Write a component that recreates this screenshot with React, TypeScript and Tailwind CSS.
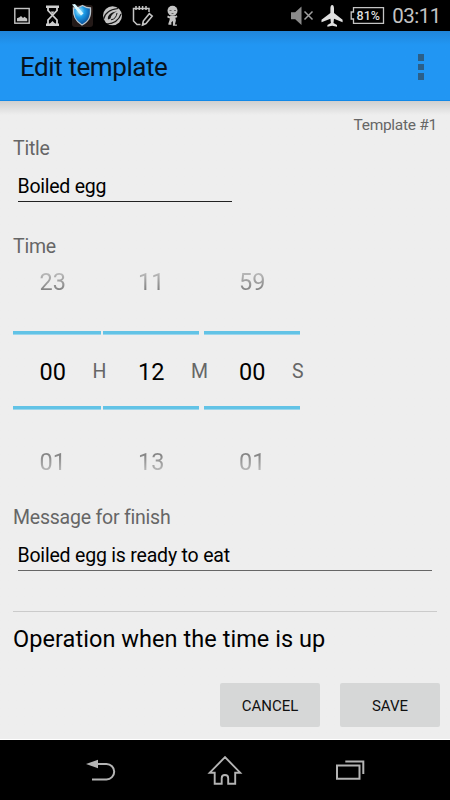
import type { ReactNode } from "react";

const columns = [
  { prev: "23", value: "00", next: "01", unit: "H", box: "w-[87.5px]", num: "pl-[26.5px]", unitBox: "left-[79.5px]" },
  { prev: "11", value: "12", next: "13", unit: "M", box: "w-[96px] ml-[2.5px]", num: "pl-[35px]", unitBox: "left-[88px]" },
  { prev: "59", value: "00", next: "01", unit: "S", box: "w-[96px] ml-[5px]", num: "pl-[35px]", unitBox: "left-[88px]" },
];

function StatusBar() {
  return (
    <div className="h-[31px] shrink-0 bg-black">
      <svg width="450" height="31" viewBox="0 0 450 31" fill="none">
        <defs>
          <radialGradient id="shield" cx="0.35" cy="0.3" r="0.75">
            <stop offset="0" stopColor="#b5f2ff" />
            <stop offset="0.4" stopColor="#1d9be6" />
            <stop offset="1" stopColor="#07448f" />
          </radialGradient>
        </defs>
        {/* gallery */}
        <rect x="14.800" y="8.500" width="14.400" height="14.700" stroke="#c4c4c4" strokeWidth="1.400" />
        <path d="M17 21.200v-3l2.500-1 1.500-1.200 2 2 1.500-1.200 2.700 2v2.400z" fill="#c4c4c4" />
        {/* hourglass */}
        <path d="M46 6.700h13M46 24.800h13" stroke="#cfcfcf" strokeWidth="2.600" />
        <path d="M48 7v3.500l9 9.500v4M57 7v3.500l-9 9.500v4" stroke="#cfcfcf" strokeWidth="1.800" />
        <path d="M50.500 11.500h4l-2 2.500zM49.500 24l3-3 3 3z" fill="#cfcfcf" />
        {/* antivirus shield */}
        <rect x="72" y="5" width="21" height="22" rx="3" fill="#241a18" />
        <path d="M73.500 8c4 .5 6-.5 9-2.500 3 2 5.500 2.500 8 2.500.5 8-1 13-8.500 17-7-4-9-9-8.500-17z" fill="url(#shield)" stroke="#b9c6cf" strokeWidth="1.300" />
        <path d="M72 4.500l3-.5 8.500 9.500-2.500 2z" fill="#d9f8ff" />
        {/* globe swirl */}
        <circle cx="112.500" cy="15.800" r="9.500" fill="#c4c4c4" />
        <path d="M103.500 19.500c1-6 6-10 14.500-11M107 24c6.500-.5 12-4 14-10" stroke="#161616" strokeWidth="1.200" />
        <path d="M108 19.500c-1-4 3.500-8 9-8-3.500 1.200-6 3.500-6.500 7z" fill="#161616" />
        <path d="M111 19.800c3.500-.3 5.500-3 6-6.800" stroke="#161616" strokeWidth="1" />
        {/* notepad */}
        <path d="M140.500 24.500h-3.500l-3.500-3.500V8.500h15.500v3.500" stroke="#c4c4c4" strokeWidth="1.500" />
        <path d="M136 6v4M139.300 6v4M142.600 6v4M146 6v4" stroke="#c4c4c4" strokeWidth="1.500" />
        <path d="M142.500 25l.8-4 6-7.300 2.900 2.500-6.200 7.400z" stroke="#c4c4c4" strokeWidth="1.600" />
        <path d="M142 25.800l.8-3.500 2.700 2.500z" fill="#c4c4c4" />
        {/* little figure */}
        <circle cx="172.500" cy="10.800" r="5" fill="#c4c4c4" />
        <path d="M169.500 10.500h2M174 10.500h2M171.500 13.500h2" stroke="#666" strokeWidth="1" />
        <path d="M170 17.600l-2.500-1.200M175 17.200l2-1" stroke="#c4c4c4" strokeWidth="1.900" />
        <path d="M170.200 15.500h4.700l1 5-1 4h2v1.200h-4v-4.600l-1.500 1.200v2.400h-3v-1.200l1.200-3.500z" fill="#c4c4c4" />
        {/* muted speaker */}
        <path d="M291 12.300h4.200l6.300-5.800v18.500l-6.300-5.800H291z" fill="#8b8b8b" />
        <path d="M304.500 11.500l8 8M312.500 11.500l-8 8" stroke="#a0a0a0" strokeWidth="1.500" />
        {/* airplane */}
        <path d="M332.200 5c1.200 0 1.800 1.600 1.800 3.500v4.600l8.600 6.700v2.500l-8.600-3.600-.5 4.300 3.500 2v1.700l-4.800-1-4.800 1v-1.700l3.500-2-.5-4.300-8.900 3.600v-2.500l8.900-6.700V8.500c0-1.900.6-3.500 1.800-3.500z" fill="#e0e0e0" />
        {/* battery */}
        <path d="M353.500 7.700h30v15.600h-30v-4.300h-2.300v-7h2.300z" stroke="#c4c4c4" strokeWidth="1.300" />
        <text x="356.500" y="20" fill="#dedede" fontFamily="Roboto, sans-serif" fontSize="12.500" fontWeight="500" textLength="23.500">81%</text>
        <text x="392.300" y="23" fill="#c4c4c4" fontFamily="Roboto, sans-serif" fontSize="20.500" textLength="49">03:11</text>
      </svg>
    </div>
  );
}

function AppBar() {
  return (
    <header className="flex h-[70px] shrink-0 items-center justify-between border-b border-[#1188e8] bg-linear-to-b from-[#2086da] to-[#2196f3] to-20% pr-[26px] pl-[20px]">
      <h1 className="mt-[3px] text-[26px] leading-[32px] tracking-[-0.42px] text-[#06131f]">Edit template</h1>
      <div className="mt-[3px] flex flex-col gap-[3px]">
        <span className="h-[6.500px] w-[6.500px] bg-[#2b5f88]" />
        <span className="h-[6.500px] w-[6.500px] bg-[#2b5f88]" />
        <span className="h-[6.500px] w-[6.500px] bg-[#2b5f88]" />
      </div>
    </header>
  );
}

function TimePicker() {
  return (
    <div className="mt-[10px] flex h-[213px] text-[23.500px] leading-[30px]">
      {columns.map((c) => (
        <div key={c.unit} className={`relative shrink-0 ${c.box}`}>
          <div className={`${c.num} bg-linear-to-b from-[#b5b5b5] from-25% to-[#858585] to-75% bg-clip-text text-transparent`}>{c.prev}</div>
          <div className="mt-[34px] h-[4px] border-b border-[#9bd6ec] bg-[#62c3e6]" />
          <div className={`mt-[22px] text-black ${c.num}`}>{c.value}</div>
          <span className={`absolute top-[90px] text-[19.500px] text-[#666] ${c.unitBox}`}>{c.unit}</span>
          <div className="mt-[19px] h-[4px] border-b border-[#9bd6ec] bg-[#62c3e6]" />
          <div className={`mt-[37px] bg-linear-to-b from-[#858585] from-25% to-[#b5b5b5] to-75% bg-clip-text text-transparent ${c.num}`}>{c.next}</div>
        </div>
      ))}
    </div>
  );
}

function DialogButton({ children }: { children: ReactNode }) {
  return (
    <button className="h-[44px] w-[100px] rounded-[2px] bg-[#d6d7d7] pt-[2px] text-[15px] text-[#111]">{children}</button>
  );
}

function NavBar() {
  return (
    <nav className="h-[60px] shrink-0 bg-black">
      <svg width="450" height="60" viewBox="0 0 450 60" fill="none" stroke="#b4b4b4" strokeWidth="2">
        <path d="M96 24h10.500a7.700 7.700 0 0 1 0 15.400H92" />
        <path d="M86 24l12-4.200v8.400z" fill="#b4b4b4" stroke="none" />
        <path d="M225 17.200l-15.300 15.500h5v11h7v-5.500c0-4.300 6.500-4.300 6.500 0v5.500h7v-11h5z" strokeWidth="1.900" />
        <path d="M337 25.500h22.500v13.300H337z" />
        <path d="M345.300 21.500h18v12.600" />
      </svg>
    </nav>
  );
}

export default function App() {
  return (
    <div className="flex h-[800px] w-[450px] flex-col overflow-hidden bg-[#eeeeee] font-['Roboto',sans-serif] font-[370]">
      <StatusBar />
      <AppBar />
      <main className="flex flex-1 flex-col border-b border-white bg-linear-to-b from-[#cfcfcf] to-[#eeeeee] to-[14px] pr-[13px] pl-[13px]">
        <div className="mt-[14px] text-right text-[15.500px] leading-[20px] tracking-[-0.28px] text-[#666]">Template #1</div>
        <div className="mt-[4px] text-[19.500px] leading-[20px] tracking-[-0.25px] text-[#666]">Title</div>
        <div className="mt-[14px] ml-[4.500px] h-[29px] w-[214.500px] border-b border-[#222] pt-px text-[19.500px] leading-[26px] tracking-[-0.25px] text-black">Boiled egg</div>
        <div className="mt-[35px] text-[19.500px] leading-[20px] tracking-[-0.25px] text-[#666]">Time</div>
        <TimePicker />
        <div className="mt-[28px] text-[19.500px] leading-[20px] tracking-[-0.22px] text-[#666]">Message for finish</div>
        <div className="mt-[14px] mr-[5px] ml-[4.500px] h-[29px] border-b border-[#666] pt-px text-[19.500px] leading-[26px] tracking-[-0.2px] text-black">Boiled egg is ready to eat</div>
        <div className="mt-[40px] border-t border-[#cbcbcb]" />
        <div className="mt-[12px] text-[23.500px] leading-[30px] tracking-[0.06px] text-black">Operation when the time is up</div>
        <div className="mt-auto mr-[-3px] mb-[12px] flex justify-end gap-5">
          <DialogButton>CANCEL</DialogButton>
          <DialogButton>SAVE</DialogButton>
        </div>
      </main>
      <NavBar />
    </div>
  );
}
